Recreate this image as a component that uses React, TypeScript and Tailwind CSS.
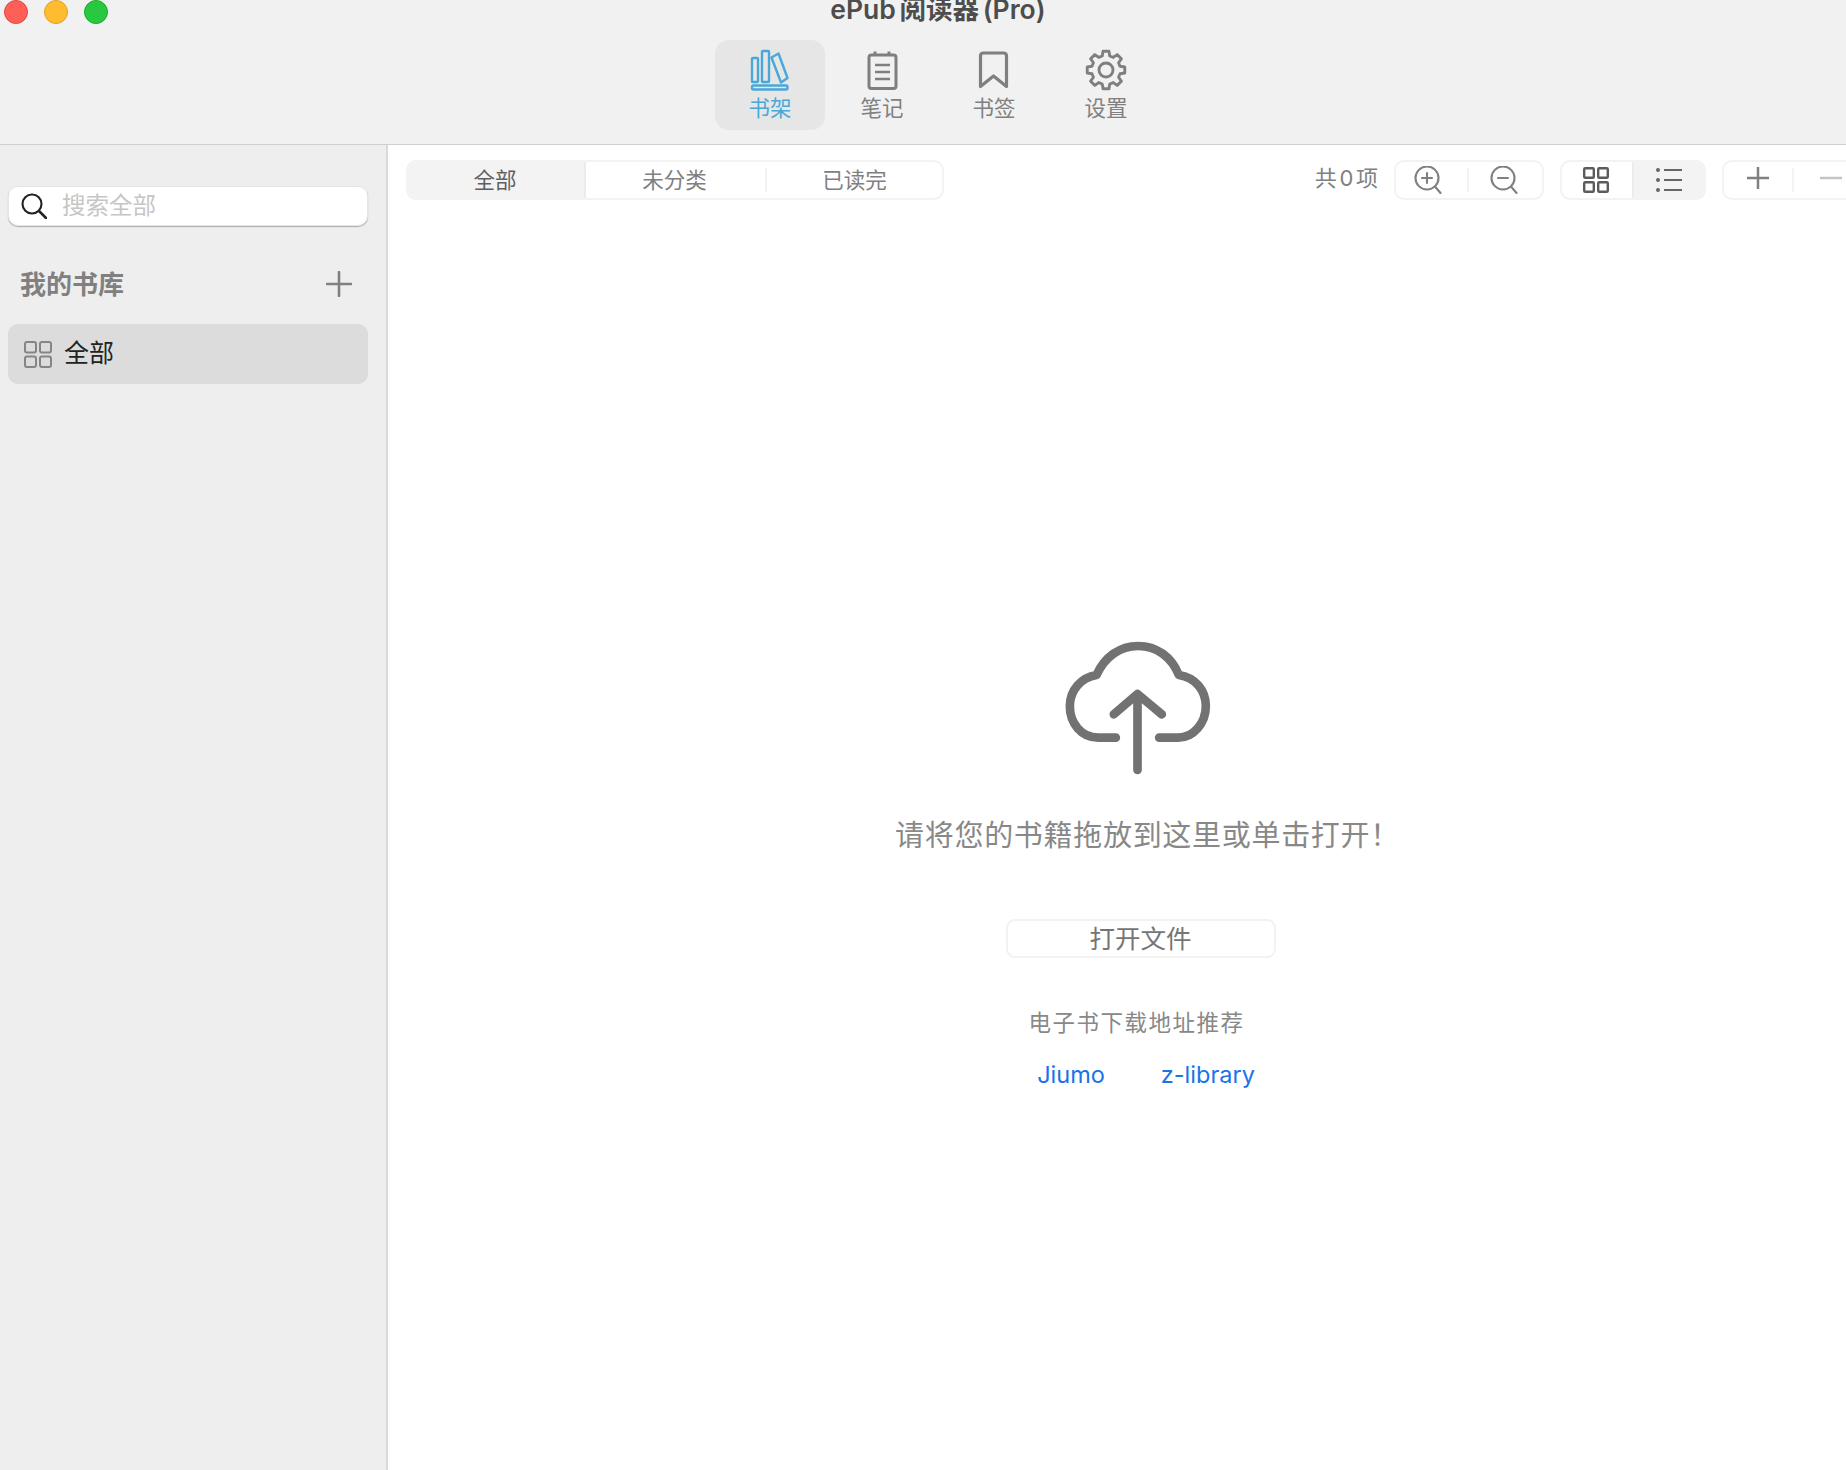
import React from "react";

const FONT = 'font-["Inter","Noto_Sans_CJK_SC",sans-serif]';

function gearPoints(cx: number, cy: number, ro: number, ri: number) {
  const pts: string[] = [];
  for (let i = 0; i < 8; i++) {
    const a = (i * 45 - 90) * (Math.PI / 180);
    for (const [d, r] of [[-15, ri], [-9, ro], [9, ro], [15, ri]] as const) {
      const t = a + (d * Math.PI) / 180;
      pts.push(`${(cx + r * Math.cos(t)).toFixed(2)},${(cy + r * Math.sin(t)).toFixed(2)}`);
    }
  }
  return pts.join(" ");
}

function BooksIcon() {
  return (
    <svg viewBox="750 48 42 44" width={42} height={44} fill="none" stroke="#4aa8d8" strokeWidth={2.4} strokeLinejoin="round">
      <rect x={753} y={58} width={6} height={24} rx={0.8} />
      <rect x={763} y={51} width={7} height={31} rx={0.8} />
      <path d="M772.5 57.5 L779.5 53.5 L788.5 78 L782 82.5 Z" />
      <rect x={753} y={85.5} width={35.5} height={4} rx={1.5} />
    </svg>
  );
}

function NotesIcon() {
  return (
    <svg viewBox="861 48 42 44" width={42} height={44} fill="none" stroke="#7f7f7f" strokeWidth={3}>
      <rect x={869} y={55} width={27} height={33.5} rx={2.5} />
      <path d="M875 51.5V55M889 51.5V55" />
      <path d="M875 65H890M875 72H890M875 79H890" strokeWidth={2.5} />
    </svg>
  );
}

function BookmarkIcon() {
  return (
    <svg viewBox="973 48 42 44" width={42} height={44} fill="none" stroke="#7f7f7f" strokeWidth={3.2} strokeLinejoin="round">
      <path d="M980.5 56 Q980.5 53 983.5 53 H1003.5 Q1006.5 53 1006.5 56 V86.5 L993.5 76 L980.5 86.5 Z" />
    </svg>
  );
}

function GearIcon() {
  return (
    <svg viewBox="1085 48 42 44" width={42} height={44} fill="none" stroke="#7f7f7f" strokeWidth={2.9} strokeLinejoin="round">
      <polygon points={gearPoints(1106, 70, 19, 14.5)} />
      <circle cx={1106} cy={70} r={7} />
    </svg>
  );
}

function ToolItem({ label, active, children }: { label: string; active?: boolean; children: React.ReactNode }) {
  return (
    <div className={`flex h-[90px] w-[110px] flex-col items-center rounded-[14px] pt-2 ${active ? "bg-[#e6e6e6]" : ""}`}>
      {children}
      <span className={`mt-[3px] text-[21.5px] leading-[26px] ${active ? "text-[#4aa8d8]" : "text-[#808080]"}`}>{label}</span>
    </div>
  );
}

function ZoomIcon({ minus }: { minus?: boolean }) {
  return (
    <svg viewBox="0 0 28 28" width={28} height={28} fill="none" stroke="#808080" strokeWidth={2.1} strokeLinecap="round">
      <circle cx={13} cy={12} r={11.5} />
      <path d="M21 20.5L26.5 27" />
      <path d="M8 12H18" />
      {!minus && <path d="M13 7V17" />}
    </svg>
  );
}

export default function App() {
  return (
    <div className={`h-[1470px] w-[1846px] overflow-hidden bg-white ${FONT}`}>
      <div className="w-[1891px]">
        {/* window toolbar */}
        <header className="h-[145px] border-b border-[#cfcfcf] bg-[#f1f1f1]">
          <div className="w-[1876px]">
            <div className="grid h-6 grid-cols-[1fr_auto_1fr] items-center">
              <div className="flex gap-4 pl-1">
                <span className="h-6 w-6 rounded-full border border-[#e2463f] bg-[#ff5f57]" />
                <span className="h-6 w-6 rounded-full border border-[#dfa023] bg-[#febc2e]" />
                <span className="h-6 w-6 rounded-full border border-[#1aab29] bg-[#28c840]" />
              </div>
              <h1 className="self-start text-[26.5px] font-semibold leading-[19px] text-[#4d4d4d] [word-spacing:-3px]">ePub 阅读器 (Pro)</h1>
              <div />
            </div>
            <nav className="mt-4 flex justify-center gap-[2px]">
              <ToolItem label="书架" active><BooksIcon /></ToolItem>
              <ToolItem label="笔记"><NotesIcon /></ToolItem>
              <ToolItem label="书签"><BookmarkIcon /></ToolItem>
              <ToolItem label="设置"><GearIcon /></ToolItem>
            </nav>
          </div>
        </header>

        <div className="flex h-[1325px]">
          {/* sidebar */}
          <aside className="w-[388px] shrink-0 border-r-2 border-[#d9d9d9] bg-[#eeeeee] px-2 pt-[41px]">
            <div className="flex h-10 w-[360px] items-center rounded-[10px] border border-[#e6e6e6] bg-white pl-3 shadow-[0_1px_1px_rgba(0,0,0,0.28)]">
              <svg viewBox="0 0 26 26" width={26} height={26} fill="none" stroke="#222" strokeWidth={2.1} strokeLinecap="round" className="shrink-0">
                <circle cx={11} cy={11} r={9.5} />
                <path d="M18 18L25 25" strokeWidth={2.5} />
              </svg>
              <input
                readOnly
                placeholder="搜索全部"
                className="ml-[15px] w-full bg-transparent text-[23.5px] leading-[30px] outline-none placeholder:text-[#c6c6c6]"
              />
            </div>
            <div className="mt-[40px] flex h-[38px] w-[360px] items-center justify-between pl-[12px] pr-[16px]">
              <span className="text-[26px] font-bold leading-[38px] text-[#808080]">我的书库</span>
              <svg viewBox="0 0 26 26" width={26} height={26} stroke="#808080" strokeWidth={2.6} strokeLinecap="round" className="mb-[2px]">
                <path d="M13 1V25M1 13H25" />
              </svg>
            </div>
            <div className="mt-[20px] flex h-[60px] w-[360px] items-center rounded-[10px] bg-[#dcdcdc] pl-4">
              <svg viewBox="0 0 28 27" width={28} height={27} fill="none" stroke="#858585" strokeWidth={2}>
                <rect x={1} y={1} width={11} height={10.5} rx={2} />
                <rect x={16} y={1} width={11} height={10.5} rx={2} />
                <rect x={1} y={15.5} width={11} height={10.5} rx={2} />
                <rect x={16} y={15.5} width={11} height={10.5} rx={2} />
              </svg>
              <span className="mb-[2px] ml-3 text-[25px] leading-[30px] text-[#222222]">全部</span>
            </div>
          </aside>

          {/* main panel */}
          <main className="flex w-[1503px] shrink-0 flex-col">
            <div className="flex items-start justify-between pl-[18px] pr-[24px] pt-[15px]">
              <div className="flex h-10 w-[538px] rounded-[10px] border-2 border-[#f3f3f3] text-[21.5px]">
                <div className="flex w-[178px] items-center justify-center rounded-l-[8px] border-r-2 border-[#ececec] bg-[#f3f3f3] pr-[2px] text-[#5f5f5f]">全部</div>
                <div className="flex w-[179px] items-center justify-center pr-[2px] text-[#808080]">未分类</div>
                <div className="my-[6px] w-[2px] bg-[#f3f3f3]" />
                <div className="flex flex-1 items-center justify-center text-[#808080]">已读完</div>
              </div>

              <div className="flex items-center">
                <span className="mb-1 text-[22px] leading-[28px] text-[#808080] [word-spacing:-3.5px]">共 0 项</span>
                <div className="ml-[16px] flex h-10 w-[150px] items-center rounded-[10px] border-2 border-[#f3f3f3]">
                  <div className="flex w-[71px] justify-center pr-[7px]"><ZoomIcon /></div>
                  <div className="h-6 w-[2px] bg-[#f3f3f3]" />
                  <div className="flex flex-1 justify-center pr-[3px]"><ZoomIcon minus /></div>
                </div>
                <div className="ml-[16px] flex h-10 w-[146px] items-stretch rounded-[10px] border-2 border-[#f3f3f3]">
                  <div className="flex w-[72px] items-center justify-center border-r-2 border-[#ececec] pr-[2px]">
                    <svg viewBox="0 0 26 26" width={26} height={26} fill="none" stroke="#5c5c5c" strokeWidth={2.4}>
                      <rect x={1.2} y={1.2} width={9.6} height={9.6} rx={1} />
                      <rect x={15.2} y={1.2} width={9.6} height={9.6} rx={1} />
                      <rect x={1.2} y={15.2} width={9.6} height={9.6} rx={1} />
                      <rect x={15.2} y={15.2} width={9.6} height={9.6} rx={1} />
                    </svg>
                  </div>
                  <div className="flex flex-1 items-center justify-center rounded-r-[8px] bg-[#f3f3f3]">
                    <svg viewBox="0 0 26 26" width={26} height={26} stroke="#666666" strokeWidth={2.2}>
                      <path d="M8 3H26M8 13H26M8 23H26" />
                      <circle cx={2} cy={3} r={2} fill="#666666" stroke="none" />
                      <circle cx={2} cy={13} r={2} fill="#666666" stroke="none" />
                      <circle cx={2} cy={23} r={2} fill="#666666" stroke="none" />
                    </svg>
                  </div>
                </div>
                <div className="ml-[16px] flex h-10 w-[145px] items-center rounded-[10px] border-2 border-[#f3f3f3]">
                  <div className="flex flex-1 justify-center pb-1">
                    <svg viewBox="0 0 22 22" width={22} height={22} stroke="#808080" strokeWidth={2.5}>
                      <path d="M11 0V22M0 11H22" />
                    </svg>
                  </div>
                  <div className="h-6 w-[2px] bg-[#f3f3f3]" />
                  <div className="flex flex-1 justify-center pb-1 pl-1">
                    <svg viewBox="0 0 22 22" width={22} height={22} stroke="#c4c4c4" strokeWidth={2.5}>
                      <path d="M0 11H22" />
                    </svg>
                  </div>
                </div>
              </div>
            </div>

            {/* empty state */}
            <div className="flex flex-col items-center pt-[440px]">
              <svg viewBox="556 60 440 411" width={147} height={137} fill="none" stroke="#727272" strokeWidth={26} strokeLinecap="round" strokeLinejoin="round" className="mr-[2px]">
                <path d="M708 353 H655 C605 353 570 310 570 258 C570 210 605 172 650 165 C675 110 720 78 775 78 C830 78 875 110 897 165 C945 172 978 210 978 258 C978 310 940 353 895 353 H838" />
                <path d="M773 225 V450 M702 283 L773 222 L846 283" />
              </svg>
              <p className="mt-[39px] pl-4 text-[29px] leading-10 tracking-[0.7px] text-[#888888]">请将您的书籍拖放到这里或单击打开！</p>
              <button className="ml-[2px] mt-[63px] h-[39px] w-[270px] rounded-[9px] border-2 border-[#f2f2f2] text-[25.5px] leading-[33px] text-[#757575]">打开文件</button>
              <p className="mt-[50px] pr-[6px] text-[22.5px] leading-[30px] tracking-[1.5px] text-[#888888]">电子书下载地址推荐</p>
              <div className="mt-[22px] flex gap-[56px] pl-[13px] text-[23.5px] leading-[30px] text-[#1a73e8]">
                <a>Jiumo</a>
                <a>z-library</a>
              </div>
            </div>
          </main>
        </div>
      </div>
    </div>
  );
}
